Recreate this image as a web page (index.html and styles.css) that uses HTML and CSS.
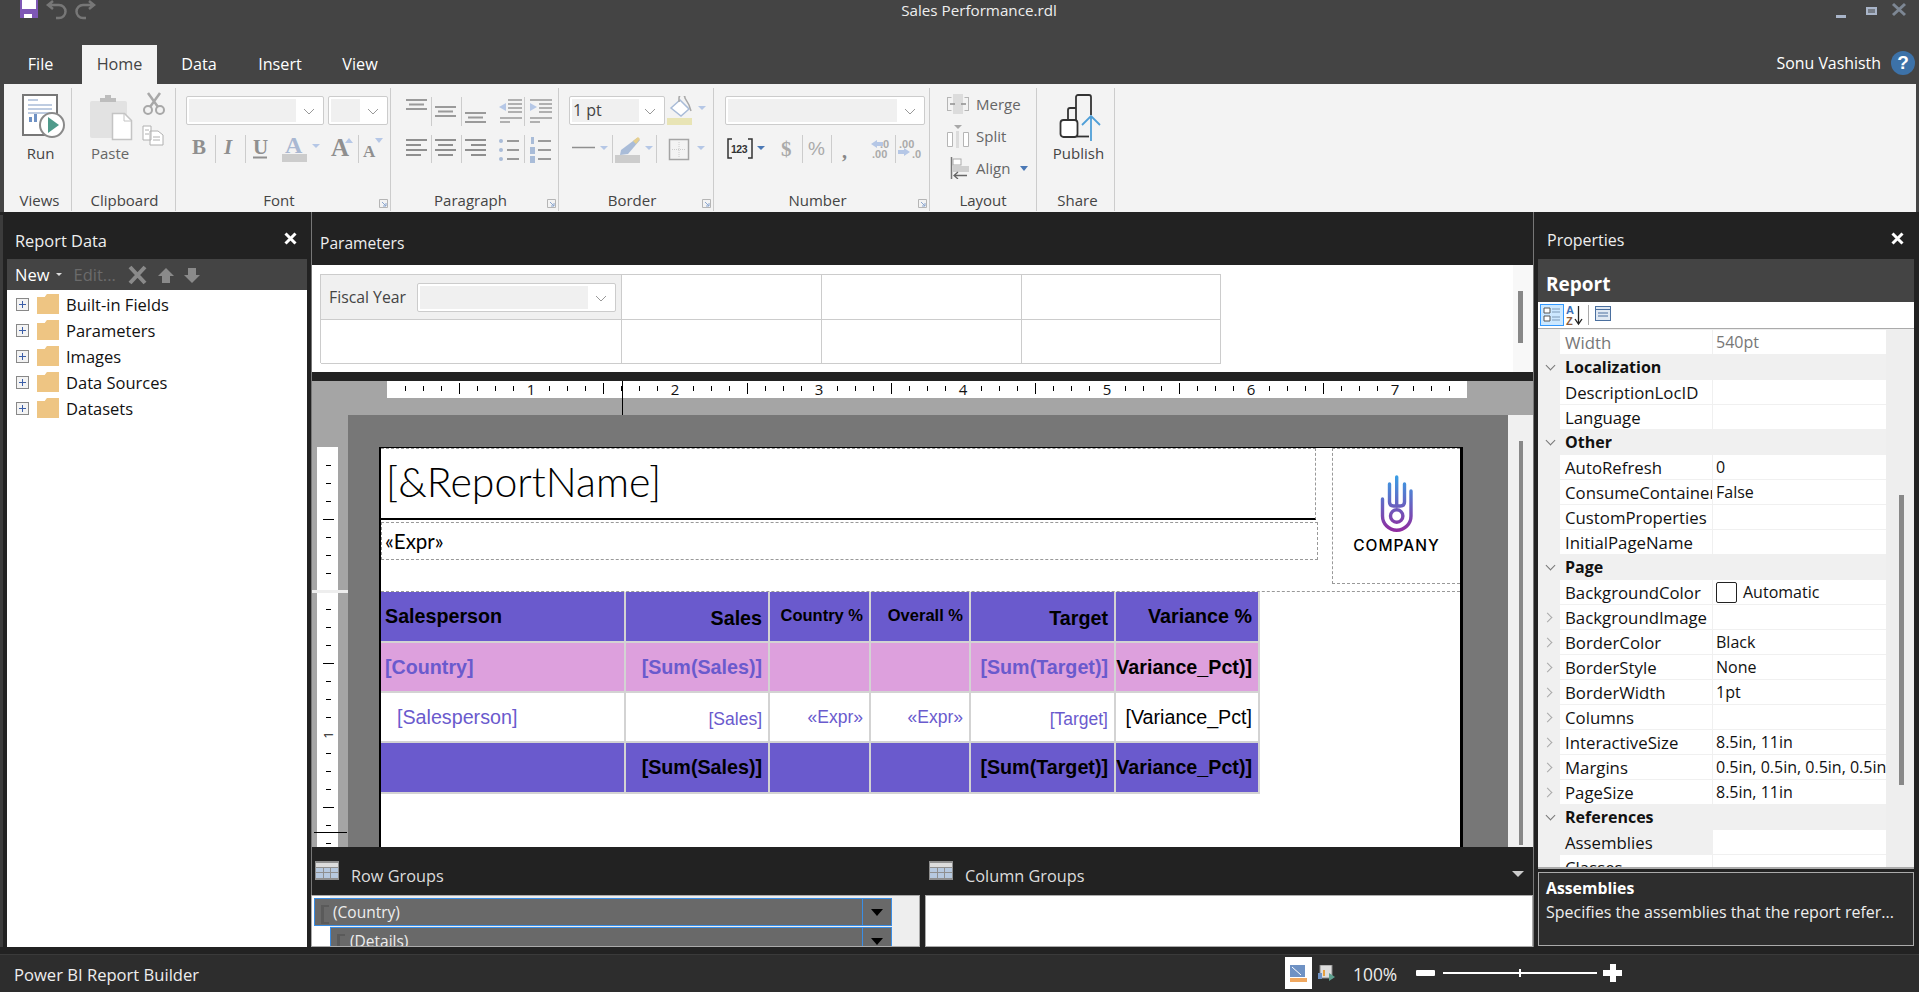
FILE: index.html
```html
<!DOCTYPE html>
<html lang="en">
<head>
    <meta charset="utf-8">
    <title>Sales Performance.rdl - Power BI Report Builder</title>
    <link rel="stylesheet" href="styles.css">
</head>
<body>
    <header class="titlebar">
        <svg class="qat" viewBox="18 0 80 22" width="80" height="22">
            <rect x="20" y="0" width="18" height="18" fill="#7e57b5"/>
            <rect x="22" y="0" width="14" height="9" fill="#fff"/>
            <rect x="24" y="14" width="8" height="4" fill="#fff"/>
            <path d="M50 5h9a6 6 0 0 1 0 13h-3M53 1l-5 4 5 4" fill="none" stroke="#777" stroke-width="2.5"/>
            <path d="M92 5h-9a6 6 0 0 0 0 13h3M89 1l5 4-5 4" fill="none" stroke="#777" stroke-width="2.5"/>
        </svg>
        <div class="doc-title">Sales Performance.rdl</div>
        <svg class="winctl" viewBox="1830 0 84 20" width="84" height="20">
            <rect x="1836" y="15" width="10" height="3" fill="#a9b5c9"/>
            <rect x="1866" y="7" width="11" height="8" fill="#a9b5c9"/>
            <path d="M1868 10h7M1868 12h7" stroke="#444" stroke-width="1"/>
            <path d="M1893 4l12 11M1905 4l-12 11" stroke="#7d8794" stroke-width="3"/>
        </svg>
    </header>

    <nav class="tabs">
        <a class="tab t-file">File</a>
        <a class="tab t-home active">Home</a>
        <a class="tab t-data">Data</a>
        <a class="tab t-insert">Insert</a>
        <a class="tab t-view">View</a>
        <span class="user">Sonu Vashisth</span>
        <span class="help">?</span>
    </nav>

    <section class="ribbon">
        <div class="group g-views">
            <div class="g-body">
                <div class="big">
                    <svg class="run-ic" viewBox="23 94 44 44" width="44" height="44">
                        <rect x="24" y="95" width="34" height="40" fill="#fff" stroke="#777" stroke-width="2"/>
                        <path d="M29 100h10M29 105h24M29 109h24M29 113h24" stroke="#a9bcd8" stroke-width="1.5"/>
                        <path d="M30 122h3v-5h-3zM35 122h3v-8h-3z" fill="#6f92c4"/>
                        <circle cx="53" cy="125" r="12" fill="#fff" stroke="#8a8a8a" stroke-width="2"/>
                        <path d="M49 117l11 8-11 8z" fill="#4f9a8b"/>
                    </svg>
                    <span class="big-label">Run</span>
                </div>
            </div>
            <div class="g-label">Views</div>
        </div>

        <div class="group g-clipboard">
            <div class="g-body">
                <svg viewBox="73 88 102 80" width="102" height="80">
                    <rect x="91" y="101" width="37" height="37" rx="2" fill="#e2e2e2"/>
                    <path d="M101 102v-4h5v-3h6v3h5v4z" fill="#bdbdbd"/>
                    <path d="M113.5 113.5h12l7 7v19h-19z" fill="#fff" stroke="#c4c4c4" stroke-width="1.5"/>
                    <path d="M125 113v8h7" fill="none" stroke="#c4c4c4"/>
                    <path d="M149 93l10 14M161 93l-10 14" stroke="#a8a8a8" stroke-width="2.5"/>
                    <circle cx="149" cy="110" r="4" fill="none" stroke="#a8a8a8" stroke-width="2"/>
                    <circle cx="161" cy="110" r="4" fill="none" stroke="#a8a8a8" stroke-width="2"/>
                    <path d="M144 126h8v14h-8zM151 131h8l5 4v10h-13z" fill="#fff" stroke="#b0b0b0"/>
                    <path d="M146 130h4M146 134h4M154 137h7M154 140h7" stroke="#b0b0b0"/>
                </svg>
                <span class="paste-label">Paste</span>
            </div>
            <div class="g-label">Clipboard</div>
        </div>

        <div class="group g-font">
            <div class="g-body">
                <div class="combos">
                    <div class="combo w-font"><span class="combo-in w-font-in"></span><svg class="chev" viewBox="0 0 12 7" width="12" height="7"><path d="M1 1l5 5 5-5" fill="none" stroke="#999"/></svg></div>
                    <div class="combo w-size"><span class="combo-in w-size-in"></span><svg class="chev" viewBox="0 0 12 7" width="12" height="7"><path d="M1 1l5 5 5-5" fill="none" stroke="#999"/></svg></div>
                </div>
                <svg class="tool-row" viewBox="176 133 215 32" width="215" height="32">
                    <text x="192" y="154" class="st st-b">B</text>
                    <path d="M215.5 135v28M245.5 135v28M358.5 135v28" stroke="#ccc"/>
                    <text x="224" y="154" class="st st-i">I</text>
                    <text x="253" y="154" class="st st-b">U</text>
                    <path d="M253 157.5h14" stroke="#8f8f8f" stroke-width="2"/>
                    <text x="285" y="153" class="st st-a">A</text>
                    <rect x="282" y="154" width="25" height="8" fill="#ccc"/>
                    <path d="M312 144h8l-4 4z" fill="#b5c7e6"/>
                    <text x="331" y="156" class="st st-g">A</text>
                    <path d="M345 143l4-5 4 5z" fill="#b5c7e6"/>
                    <text x="363" y="157" class="st st-s">A</text>
                    <path d="M375 138h8l-4 5z" fill="#b5c7e6"/>
                </svg>
            </div>
            <div class="g-label">Font</div>
            <svg class="launcher" viewBox="0 0 9 9" width="9" height="9"><path d="M.5.5h8v8h-8z" fill="none" stroke="#b5b5b5"/><path d="M3 3l4 4M7 4v3H4" fill="none" stroke="#8ba6cf"/></svg>
        </div>

        <div class="group g-para">
            <div class="g-body">
                <svg viewBox="392 88 167 80" width="167" height="80">
                    <path d="M432.5 97v29M462.5 97v29M525.5 97v29M432.5 135v28M462.5 135v28M525.5 135v28" stroke="#ccc"/>
                    <path d="M407 100h21M410 104.5h15M407 109h21" stroke="#9a9a9a" stroke-width="2"/>
                    <path d="M436 107h21M439 111.5h15M436 116h21" stroke="#9a9a9a" stroke-width="2"/>
                    <path d="M466 113h21M469 117.5h15M466 122h21" stroke="#9a9a9a" stroke-width="2"/>
                    <path d="M509 100h14M509 104h14M509 108h14M509 112h14M501 118h22M501 122h10" stroke="#9a9a9a" stroke-width="1.5"/>
                    <path d="M507 103l-7 4 7 4z" fill="#b5c7e6"/>
                    <path d="M531 100h22M540 104h13M540 108h13M540 112h13M531 118h22M531 122h10" stroke="#9a9a9a" stroke-width="1.5"/>
                    <path d="M531 103l7 4-7 4z" fill="#b5c7e6"/>
                    <path d="M407 140h21M407 145h15M407 150h21M407 155h15" stroke="#8f8f8f" stroke-width="2"/>
                    <path d="M436 140h21M439 145h15M436 150h21M439 155h15" stroke="#8f8f8f" stroke-width="2"/>
                    <path d="M466 140h21M472 145h15M466 150h21M472 155h15" stroke="#8f8f8f" stroke-width="2"/>
                    <path d="M508 141h12M508 150h12M508 159h12" stroke="#9a9a9a" stroke-width="2"/>
                    <circle cx="502" cy="141" r="2" fill="#a9bcd8"/><circle cx="502" cy="150" r="2" fill="#a9bcd8"/><circle cx="502" cy="159" r="2" fill="#a9bcd8"/>
                    <path d="M539 141h13M539 150h13M539 159h13" stroke="#9a9a9a" stroke-width="2"/>
                    <path d="M532 137h3v7h-3zM531 147h5v7h-5zM531 156h5v7h-5z" fill="#a9bcd8"/>
                </svg>
            </div>
            <div class="g-label">Paragraph</div>
            <svg class="launcher" viewBox="0 0 9 9" width="9" height="9"><path d="M.5.5h8v8h-8z" fill="none" stroke="#b5b5b5"/><path d="M3 3l4 4M7 4v3H4" fill="none" stroke="#8ba6cf"/></svg>
        </div>

        <div class="group g-border">
            <div class="g-body">
                <div class="combos">
                    <div class="combo w-line"><span class="combo-in w-line-in">1 pt</span><svg class="chev" viewBox="0 0 12 7" width="12" height="7"><path d="M1 1l5 5 5-5" fill="none" stroke="#999"/></svg></div>
                    <svg viewBox="668 96 42 30" width="42" height="30">
                        <path d="M672 108l9-8 9 9-8 7z" fill="#fff" stroke="#a9bcd8" stroke-width="1.5"/>
                        <path d="M680 102v-4a3 3 0 0 1 6 0l4 7 2 6" fill="none" stroke="#a8a8a8" stroke-width="1.5"/>
                        <rect x="668" y="118" width="25" height="7" fill="#e8e4b5"/>
                        <path d="M699 106h8l-4 4z" fill="#b5c7e6"/>
                    </svg>
                </div>
                <svg class="tool-row" viewBox="560 133 154 32" width="154" height="32">
                    <path d="M573 147.5h23" stroke="#8f8f8f" stroke-width="1.5"/>
                    <path d="M601 146h8l-4 4z" fill="#b5c7e6"/>
                    <path d="M613.5 135v28M657.5 135v28" stroke="#ccc"/>
                    <path d="M622 150l16-12 3 2-12 14-8 1z" fill="#a9bcd8"/>
                    <path d="M634 141l5-4 2 2-4 5z" fill="#e6cf8f"/>
                    <rect x="616" y="155" width="25" height="8" fill="#ccc"/>
                    <path d="M646 146h8l-4 4z" fill="#b5c7e6"/>
                    <rect x="670.5" y="139.5" width="19" height="20" fill="none" stroke="#a5a5a5" stroke-width="1.5"/>
                    <path d="M680 142v15M673 149.5h14" stroke="#ccc" stroke-dasharray="1 1"/>
                    <path d="M698 146h8l-4 4z" fill="#b5c7e6"/>
                </svg>
            </div>
            <div class="g-label">Border</div>
            <svg class="launcher" viewBox="0 0 9 9" width="9" height="9"><path d="M.5.5h8v8h-8z" fill="none" stroke="#b5b5b5"/><path d="M3 3l4 4M7 4v3H4" fill="none" stroke="#8ba6cf"/></svg>
        </div>

        <div class="group g-number">
            <div class="g-body">
                <div class="combos">
                    <div class="combo w-num"><span class="combo-in w-num-in"></span><svg class="chev" viewBox="0 0 12 7" width="12" height="7"><path d="M1 1l5 5 5-5" fill="none" stroke="#999"/></svg></div>
                </div>
                <svg class="tool-row" viewBox="714 133 216 32" width="216" height="32">
                    <path d="M732 139h-4v19h4M748 139h4v19h-4" fill="none" stroke="#333" stroke-width="1.5"/>
                    <text x="731" y="153" class="st st-123">123</text>
                    <path d="M757 146h8l-4 4z" fill="#4a78b5"/>
                    <text x="781" y="156" class="st st-cur">$</text>
                    <path d="M802.5 135v28M831.5 135v28M895.5 135v28" stroke="#ccc"/>
                    <text x="808" y="155" class="st st-pct">%</text>
                    <text x="842" y="158" class="st st-comma">,</text>
                    <path d="M871 144l6-4v2h6v4h-6v2z" fill="#b5c7e6"/>
                    <text x="880" y="148" class="st st-dec">.0</text>
                    <text x="872" y="158" class="st st-dec">.00</text>
                    <text x="899" y="148" class="st st-dec">.00</text>
                    <text x="912" y="158" class="st st-dec">.0</text>
                    <path d="M910 152l-6-4v2h-6v4h6v2z" fill="#b5c7e6"/>
                </svg>
            </div>
            <div class="g-label">Number</div>
            <svg class="launcher" viewBox="0 0 9 9" width="9" height="9"><path d="M.5.5h8v8h-8z" fill="none" stroke="#b5b5b5"/><path d="M3 3l4 4M7 4v3H4" fill="none" stroke="#8ba6cf"/></svg>
        </div>

        <div class="group g-layout">
            <div class="g-body">
                <div class="lay-row">
                    <svg viewBox="0 0 24 22" width="24" height="22">
                        <path d="M1.5 4.5h4M1.5 17.5h4M18.5 4.5h4M18.5 17.5h4M1.5 4v14M22.5 4v14" fill="none" stroke="#b5b5b5"/>
                        <rect x="7" y="1" width="10" height="20" fill="#dcdcdc"/>
                        <path d="M4 11h5M20 11h-5" stroke="#8f8f8f" stroke-width="1.5"/>
                    </svg>
                    <span>Merge</span>
                </div>
                <div class="lay-row">
                    <svg viewBox="0 0 24 24" width="24" height="24">
                        <path d="M1.5 8.5h5v14h-5zM17.5 8.5h5v14h-5z" fill="#fff" stroke="#b5b5b5"/>
                        <rect x="10" y="7" width="3" height="17" fill="#dcdcdc"/>
                        <path d="M8 1h8l-4 4z" fill="#a8a8a8"/>
                    </svg>
                    <span>Split</span>
                </div>
                <div class="lay-row">
                    <svg viewBox="0 0 24 22" width="24" height="22">
                        <path d="M5.5 0v22" stroke="#777" stroke-width="1.5"/>
                        <rect x="7" y="2" width="8" height="6" fill="#fff" stroke="#aaa"/>
                        <rect x="7" y="9" width="16" height="6" fill="#cfcfcf"/>
                        <path d="M21 18.5H8M12 15l-4 3.5 4 3.5" fill="none" stroke="#666" stroke-width="1.3"/>
                    </svg>
                    <span>Align</span>
                    <svg class="lay-caret" viewBox="0 0 8 5" width="8" height="5"><path d="M0 0h8L4 5z" fill="#4a78b5"/></svg>
                </div>
            </div>
            <div class="g-label">Layout</div>
        </div>

        <div class="group g-share">
            <div class="g-body">
                <div class="big">
                    <svg class="pub-ic" viewBox="0 0 44 48" width="44" height="48">
                        <path d="M17 14V3a2 2 0 0 1 2-2h11a2 2 0 0 1 2 2v18M17 14H11a2 2 0 0 0-2 2v10M17 14v12" fill="none" stroke="#333" stroke-width="1.8"/>
                        <rect x="1.5" y="26" width="17" height="17" rx="3" fill="#fff" stroke="#333" stroke-width="1.8"/>
                        <path d="M18 42.5h12" stroke="#333" stroke-width="1.8"/>
                        <path d="M32 47V22M23 31l9-9 9 9" fill="none" stroke="#4f9fd8" stroke-width="1.8"/>
                    </svg>
                    <span class="big-label publish">Publish</span>
                </div>
            </div>
            <div class="g-label">Share</div>
        </div>
    </section>

    <main class="workspace">
        <aside class="data-panel">
            <div class="panel-head">
                <span>Report Data</span>
                <svg class="close" viewBox="0 0 13 13" width="13" height="13"><path d="M1.5 1.5l10 10M11.5 1.5l-10 10" stroke="#fff" stroke-width="3"/></svg>
            </div>
            <div class="data-tools">
                <span class="new">New</span>
                <svg class="new-caret" viewBox="0 0 6 3" width="6" height="3"><path d="M0 0h6L3 3z" fill="#ddd"/></svg>
                <span class="edit">Edit...</span>
                <svg viewBox="0 0 74 20" width="74" height="20">
                    <path d="M2 2l15 16M17 2L2 18" stroke="#8a8a8a" stroke-width="4"/>
                    <path d="M38 3l8 8h-4v7h-8v-7h-4z" fill="#8a8a8a"/>
                    <path d="M64 18l8-8h-4V3h-8v7h-4z" fill="#8a8a8a"/>
                </svg>
            </div>
            <ul class="tree">
                <li><i class="plus"></i><i class="folder"></i>Built-in Fields</li>
                <li><i class="plus"></i><i class="folder"></i>Parameters</li>
                <li><i class="plus"></i><i class="folder"></i>Images</li>
                <li><i class="plus"></i><i class="folder"></i>Data Sources</li>
                <li><i class="plus"></i><i class="folder"></i>Datasets</li>
            </ul>
        </aside>

        <div class="center">
            <div class="params-head">Parameters</div>
            <div class="params-body">
                <div class="params-grid">
                    <div class="p-cell p-first">
                        <span>Fiscal Year</span>
                        <div class="combo w-fy"><span class="combo-in w-fy-in"></span><svg class="chev" viewBox="0 0 12 7" width="12" height="7"><path d="M1 1l5 5 5-5" fill="none" stroke="#999"/></svg></div>
                    </div>
                    <div class="p-cell"></div><div class="p-cell"></div><div class="p-cell"></div>
                    <div class="p-cell"></div><div class="p-cell"></div><div class="p-cell"></div><div class="p-cell"></div>
                </div>
                <div class="params-scroll"><i></i></div>
            </div>
            <div class="band"></div>

            <div class="design">
                <svg class="hruler" viewBox="312 381 1221 34" width="1221" height="34">
                    <defs>
                        <pattern id="hticks" x="387" y="381" width="144" height="17" patternUnits="userSpaceOnUse">
                            <path d="M18.5 5v5M36.5 5v5M54.5 5v5M90.5 5v5M108.5 5v5M126.5 5v5" stroke="#000"/>
                            <path d="M72.5 2v11" stroke="#000"/>
                        </pattern>
                    </defs>
                    <rect x="387" y="381" width="1080" height="17" fill="#fff"/>
                    <rect x="387" y="381" width="1080" height="17" fill="url(#hticks)"/>
                    <g class="rnum" text-anchor="middle">
                        <text x="531" y="395">1</text><text x="675" y="395">2</text><text x="819" y="395">3</text>
                        <text x="963" y="395">4</text><text x="1107" y="395">5</text><text x="1251" y="395">6</text><text x="1395" y="395">7</text>
                    </g>
                    <path d="M622.5 381v34" stroke="#000"/>
                </svg>
                <div class="design-row">
                    <svg class="vruler" viewBox="312 415 36 432" width="36" height="432">
                        <defs>
                            <pattern id="vticks" x="317" y="447" width="21" height="144" patternUnits="userSpaceOnUse">
                                <path d="M9 18.5h5M9 36.5h5M9 54.5h5M9 90.5h5M9 108.5h5M9 126.5h5" stroke="#000"/>
                                <path d="M6 72.5h11" stroke="#000"/>
                            </pattern>
                        </defs>
                        <rect x="317" y="447" width="21" height="400" fill="#fff"/>
                        <rect x="317" y="447" width="21" height="400" fill="url(#vticks)"/>
                        <rect x="312" y="590" width="36" height="3" fill="#eee"/>
                        <text class="rnum-v" transform="translate(333 735) rotate(-90)" text-anchor="middle">1</text>
                        <path d="M314 832.5h33" stroke="#000"/>
                    </svg>
                    <div class="canvas">
                        <div class="page">
                            <div class="rep-head">
                                <div class="rep-titles">
                                    <div class="rep-title">[&amp;ReportName]</div>
                                    <div class="rep-sub">«Expr»</div>
                                </div>
                                <div class="rep-logo">
                                    <svg viewBox="0 0 34 58" width="34" height="58">
                                        <defs>
                                            <linearGradient id="hand" gradientUnits="userSpaceOnUse" x1="0" y1="0" x2="0" y2="58">
                                                <stop offset="0" stop-color="#38a0e6"/>
                                                <stop offset="1" stop-color="#93289d"/>
                                            </linearGradient>
                                        </defs>
                                        <g fill="none" stroke="url(#hand)" stroke-width="3.4" stroke-linecap="round">
                                            <path d="M2.5 24V41a14.25 14.25 0 0 0 28.5 0V16"/>
                                            <path d="M9.5 9V27q0 4 4 4h7q4 0 4-4V9"/>
                                            <path d="M16.7 2V31"/>
                                            <circle cx="16.7" cy="41" r="6.2"/>
                                        </g>
                                    </svg>
                                    <span class="company">COMPANY</span>
                                </div>
                            </div>
                            <div class="rep-table">
                                <div class="c h l big-b">Salesperson</div>
                                <div class="c h r big-b low">Sales</div>
                                <div class="c h r small-b">Country %</div>
                                <div class="c h r small-b">Overall %</div>
                                <div class="c h r big-b low">Target</div>
                                <div class="c h r big-b">Variance %</div>

                                <div class="c pk l big-b">[Country]</div>
                                <div class="c pk r big-b">[Sum(Sales)]</div>
                                <div class="c pk"></div>
                                <div class="c pk"></div>
                                <div class="c pk r big-b">[Sum(Target)]</div>
                                <div class="c pk r big-b blk">Variance_Pct)]</div>

                                <div class="c wh l ind">[Salesperson]</div>
                                <div class="c wh r sm low">[Sales]</div>
                                <div class="c wh r sm">«Expr»</div>
                                <div class="c wh r sm">«Expr»</div>
                                <div class="c wh r sm low">[Target]</div>
                                <div class="c wh r blk">[Variance_Pct]</div>

                                <div class="c h"></div>
                                <div class="c h r big-b">[Sum(Sales)]</div>
                                <div class="c h"></div>
                                <div class="c h"></div>
                                <div class="c h r big-b">[Sum(Target)]</div>
                                <div class="c h r big-b">Variance_Pct)]</div>
                            </div>
                        </div>
                    </div>
                    <div class="design-scroll"><i></i></div>
                </div>
            </div>

            <div class="groups">
                <div class="groups-head">
                    <div class="gh gh-row">
                        <svg class="tbl-ic" viewBox="0 0 24 19" width="24" height="19"><rect width="24" height="19" fill="#8f8f8f"/><path d="M1 2h22v4H1z" fill="#ddd"/><path d="M1 7h7v4H1zM9 7h6v4H9zM16 7h7v4h-7zM1 12h7v5H1zM9 12h6v5H9zM16 12h7v5h-7z" fill="#b7c9df"/></svg>
                        <span>Row Groups</span>
                    </div>
                    <div class="gh gh-col">
                        <svg class="tbl-ic" viewBox="0 0 24 19" width="24" height="19"><rect width="24" height="19" fill="#8f8f8f"/><path d="M1 2h22v4H1z" fill="#ddd"/><path d="M1 7h7v4H1zM9 7h6v4H9zM16 7h7v4h-7zM1 12h7v5H1zM9 12h6v5H9zM16 12h7v5h-7z" fill="#b7c9df"/></svg>
                        <span>Column Groups</span>
                        <svg class="gh-tri" viewBox="0 0 12 6" width="12" height="6"><path d="M0 0h12L6 6z" fill="#ccc"/></svg>
                    </div>
                </div>
                <div class="groups-body">
                    <div class="row-groups">
                        <div class="grp-item"><span>(Country)</span><b class="grp-drop"><svg viewBox="0 0 12 7" width="12" height="7"><path d="M0 0h12L6 7z" fill="#000"/></svg></b></div>
                        <div class="grp-item grp-sub"><span>(Details)</span><b class="grp-drop"><svg viewBox="0 0 12 7" width="12" height="7"><path d="M0 0h12L6 7z" fill="#000"/></svg></b></div>
                    </div>
                    <div class="col-groups"></div>
                </div>
            </div>
        </div>

        <aside class="prop-panel">
            <div class="panel-head">
                <span>Properties</span>
                <svg class="close" viewBox="0 0 13 13" width="13" height="13"><path d="M1.5 1.5l10 10M11.5 1.5l-10 10" stroke="#fff" stroke-width="3"/></svg>
            </div>
            <div class="prop-obj">Report</div>
            <div class="prop-tools">
                <svg viewBox="1538 302 80 25" width="80" height="25">
                    <rect x="1540.5" y="304.5" width="23" height="21" fill="#cce8ff" stroke="#3399ff"/>
                    <path d="M1544 308h6v5h-6zM1544 316h6v5h-6z" fill="#fff" stroke="#555"/>
                    <path d="M1552 309h8M1552 312h8M1552 317h8M1552 320h8" stroke="#7d9ab8"/>
                    <text x="1566" y="314" class="az az-a">A</text>
                    <text x="1566" y="325" class="az az-z">Z</text>
                    <path d="M1578.5 306v17M1575 319l3.5 5 3.5-5" fill="none" stroke="#222" stroke-width="1.3"/>
                    <path d="M1588.5 305v20" stroke="#aaa"/>
                    <rect x="1595.5" y="306.5" width="15" height="14" fill="#dfe8f3" stroke="#4a6f9f"/>
                    <path d="M1595 309.5h16M1598 313h10M1598 316h10" stroke="#4a6f9f"/>
                </svg>
            </div>
            <div class="prop-grid">
                <div class="prop-rows">
                    <div class="pr dim"><em></em><span class="n">Width</span><span class="v">540pt</span></div>
                    <div class="pr cat"><em class="down"></em><span class="n">Localization</span></div>
                    <div class="pr"><em></em><span class="n">DescriptionLocID</span><span class="v"></span></div>
                    <div class="pr"><em></em><span class="n">Language</span><span class="v"></span></div>
                    <div class="pr cat"><em class="down"></em><span class="n">Other</span></div>
                    <div class="pr"><em></em><span class="n">AutoRefresh</span><span class="v">0</span></div>
                    <div class="pr"><em></em><span class="n">ConsumeContainer</span><span class="v">False</span></div>
                    <div class="pr"><em></em><span class="n">CustomProperties</span><span class="v"></span></div>
                    <div class="pr"><em></em><span class="n">InitialPageName</span><span class="v"></span></div>
                    <div class="pr cat"><em class="down"></em><span class="n">Page</span></div>
                    <div class="pr"><em></em><span class="n">BackgroundColor</span><span class="v swatch-v"><i class="swatch"></i>Automatic</span></div>
                    <div class="pr"><em class="right"></em><span class="n">BackgroundImage</span><span class="v"></span></div>
                    <div class="pr"><em class="right"></em><span class="n">BorderColor</span><span class="v">Black</span></div>
                    <div class="pr"><em class="right"></em><span class="n">BorderStyle</span><span class="v">None</span></div>
                    <div class="pr"><em class="right"></em><span class="n">BorderWidth</span><span class="v">1pt</span></div>
                    <div class="pr"><em class="right"></em><span class="n">Columns</span><span class="v"></span></div>
                    <div class="pr"><em class="right"></em><span class="n">InteractiveSize</span><span class="v">8.5in, 11in</span></div>
                    <div class="pr"><em class="right"></em><span class="n">Margins</span><span class="v">0.5in, 0.5in, 0.5in, 0.5in</span></div>
                    <div class="pr"><em class="right"></em><span class="n">PageSize</span><span class="v">8.5in, 11in</span></div>
                    <div class="pr cat"><em class="down"></em><span class="n">References</span></div>
                    <div class="pr sel"><em></em><span class="n">Assemblies</span><span class="v"></span></div>
                    <div class="pr"><em></em><span class="n">Classes</span><span class="v"></span></div>
                </div>
                <div class="prop-scroll"><i></i></div>
            </div>
            <div class="prop-desc">
                <strong>Assemblies</strong>
                <p>Specifies the assemblies that the report refer...</p>
            </div>
        </aside>
    </main>

    <footer class="status">
        <span class="app-name">Power BI Report Builder</span>
        <div class="view-btn">
            <svg viewBox="0 0 17 17" width="17" height="17"><rect y="0" width="15" height="12" fill="#6f92c4"/><path d="M2 2l9 8" stroke="#fff"/><rect y="13" width="17" height="4" fill="#f0a860"/></svg>
        </div>
        <svg class="view-ic" viewBox="0 0 17 17" width="17" height="17"><rect x="2" width="12" height="13" fill="#ddd" stroke="#888"/><path d="M0 8h4v6H0z" fill="#6f92c4"/><path d="M6 5v6" stroke="#e6a040" stroke-width="2"/><path d="M11 8l6 4-6 4z" fill="#5ea08f"/></svg>
        <span class="zoom-val">100%</span>
        <svg class="zoom" viewBox="1415 0 206 20" width="206" height="20">
            <rect x="1415" y="7" width="19" height="6" rx="1" fill="#fff"/>
            <rect x="1442" y="9" width="154" height="2" fill="#fff"/>
            <rect x="1518" y="6" width="2" height="8" fill="#fff"/>
            <path d="M1609 1h6v6h6v6h-6v6h-6v-6h-7V7h7z" fill="#fff"/>
        </svg>
    </footer>
</body>
</html>
```

FILE: styles.css
```css
* {
    box-sizing: border-box;
}

body {
    margin: 0;
    width: 1919px;
    height: 992px;
    overflow: hidden;
    background: #444;
    color: #fff;
    font-family: "Open Sans", "Noto Sans", sans-serif;
    font-size: 16px;
    display: flex;
    flex-direction: column;
}

svg {
    display: block;
    flex: none;
}

/* title bar */
.titlebar {
    height: 45px;
    flex: none;
    display: grid;
    grid-template-columns: 900px 158px 1fr;
    align-items: start;
}

.qat {
    margin-left: 18px;
}

.doc-title {
    line-height: 21px;
    font-size: 15.2px;
    color: #eee;
    text-align: center;
    white-space: nowrap;
}

.winctl {
    justify-self: end;
    margin-right: 5px;
}

/* tabs */
.tabs {
    height: 39px;
    flex: none;
    display: flex;
    align-items: stretch;
    padding-left: 8px;
}

.tab {
    padding-top: 9px;
    line-height: 20px;
    font-size: 16.2px;
    color: #fff;
    text-align: center;
}

.t-file { width: 65px; margin-right: 9px; }
.t-home { width: 75px; }
.t-data { width: 84px; }
.t-insert { width: 78px; }
.t-view { width: 82px; }

.tab.active {
    background: #f3f3f3;
    color: #444;
}

.user {
    margin-left: auto;
    line-height: 20px;
    padding-top: 8px;
    font-size: 15.9px;
}

.help {
    width: 24px;
    height: 24px;
    margin: 6px 4px 0 10px;
    border-radius: 50%;
    background: #3d72a8;
    font: bold 19px/24px "Liberation Sans", sans-serif;
    text-align: center;
}

/* ribbon */
.ribbon {
    height: 128px;
    flex: none;
    margin: 0 3px 0 4px;
    background: #f3f3f3;
    color: #444;
    display: flex;
    padding-top: 4px;
}

.group {
    position: relative;
    flex: none;
    height: 123px;
    border-right: 1px solid #ccc;
    display: flex;
    flex-direction: column;
}

.g-body {
    height: 100px;
    position: relative;
}

.g-label {
    height: 23px;
    line-height: 25px;
    text-align: center;
    font-size: 15px;
}

.launcher {
    position: absolute;
    right: 2px;
    bottom: 3px;
}

.g-views { width: 68px; }
.g-clipboard { width: 104px; }
.g-font { width: 215px; }
.g-para { width: 168px; }
.g-border { width: 155px; }
.g-number { width: 216px; }
.g-layout { width: 107px; }
.g-share { width: 78px; }

.g-views .g-label { padding-left: 4px; }
.g-clipboard .g-label { padding-left: 2px; }
.g-font .g-label,
.g-border .g-label,
.g-para .g-label,
.g-number .g-label { padding-right: 8px; }
.g-share .g-label { padding-left: 4px; }

.big {
    display: flex;
    flex-direction: column;
    align-items: center;
    padding-top: 6px;
}

.g-views .big { padding-left: 6px; }
.g-share .big { padding-left: 6px; }

.run-ic { margin-left: 6px; }
.pub-ic { margin-left: 5px; }

.big-label {
    line-height: 20px;
    margin-top: 5px;
    font-size: 15px;
}

.publish {
    margin-top: 1px;
}

.paste-label {
    position: absolute;
    left: 19px;
    top: 55px;
    line-height: 20px;
    font-size: 15px;
    color: #666;
}

.combos {
    display: flex;
    gap: 4px;
    padding-top: 8px;
    height: 37px;
}

.g-font .combos { padding-left: 10px; }
.g-border .combos { padding-left: 10px; gap: 2px; }
.g-number .combos { padding-left: 11px; }

.combo {
    height: 29px;
    border: 1px solid #ccc;
    border-radius: 2px;
    background: #fff;
    display: flex;
    align-items: center;
    padding: 2px;
    position: relative;
    color: #444;
}

.combo-in {
    height: 100%;
    background: #f0f0f0;
    display: block;
    line-height: 22px;
    padding-left: 1px;
}

.chev {
    position: absolute;
    right: 8px;
    top: 11px;
}

.w-font { width: 138px; }
.w-font-in { width: 107px; }
.w-size { width: 60px; }
.w-size-in { width: 29px; }
.w-line { width: 96px; }
.w-line-in { width: 67px; }
.w-num { width: 200px; }
.w-num-in { width: 169px; }
.w-fy { width: 199px; }
.w-fy-in { width: 168px; }

.tool-row {
    margin-top: 8px;
}

.st {
    font-family: "Liberation Serif", serif;
    fill: #8f8f8f;
}

.st-b { font-size: 21px; font-weight: bold; }
.st-i { font-size: 21px; font-weight: bold; font-style: italic; }
.st-a { font-size: 24px; font-weight: bold; fill: #a9b8d2; }
.st-g { font-size: 25px; font-weight: bold; }
.st-s { font-size: 17px; font-weight: bold; }
.st-123 { font-size: 10.5px; font-weight: bold; fill: #333; font-family: "Liberation Sans", sans-serif; letter-spacing: -.5px; }
.st-cur { font-size: 21px; font-weight: bold; fill: #aaa; }
.st-pct { font-size: 19px; fill: #aaa; font-family: "Liberation Sans", sans-serif; }
.st-comma { font-size: 20px; font-weight: bold; fill: #888; }
.st-dec { font-size: 11px; fill: #aaa; font-weight: bold; font-family: "Liberation Sans", sans-serif; }

.lay-row {
    display: flex;
    align-items: center;
    height: 32px;
    padding-left: 16px;
    gap: 6px;
    color: #666;
    font-size: 15px;
}

.lay-caret {
    margin-left: 4px;
}

/* workspace */
.workspace {
    height: 735px;
    flex: none;
    display: flex;
    background: #222;
    padding-left: 3px;
    position: relative;
}

.workspace::before {
    content: "";
    position: absolute;
    left: 0;
    top: 3px;
    bottom: 0;
    width: 3px;
    background: #3c3c3c;
}

.panel-head {
    height: 47px;
    display: flex;
    align-items: center;
    justify-content: space-between;
    padding: 9px 10px 0 12px;
    color: #eee;
}

.close {
    margin-top: -3px;
}

.data-panel {
    width: 309px;
    flex: none;
    display: flex;
    flex-direction: column;
    border-right: 1px solid #777;
}

.data-panel .panel-head {
    padding-right: 14px;
    font-size: 16.4px;
}

.data-tools {
    height: 31px;
    margin: 0 4px;
    background: #444;
    display: flex;
    align-items: center;
    padding-left: 8px;
    font-size: 16.5px;
}

.new {
    color: #fff;
}

.new-caret {
    margin: 0 0 0 7px;
}

.edit {
    color: #6b6b6b;
    margin: 0 12px 0 11px;
}

.tree {
    flex: 1;
    margin: 0 4px;
    padding: 1px 0 0;
    list-style: none;
    background: #fff;
    color: #111;
    font-size: 16.5px;
}

.tree li {
    height: 26px;
    display: flex;
    align-items: center;
}

.plus {
    width: 13px;
    height: 13px;
    margin-left: 9px;
    border: 1px solid #888;
    background:
        linear-gradient(#3b5ea8, #3b5ea8) center / 7px 1px no-repeat,
        linear-gradient(#3b5ea8, #3b5ea8) center / 1px 7px no-repeat,
        #f3f3f3;
}

.folder {
    width: 22px;
    height: 20px;
    margin: 0 7px 0 8px;
    background: #eec583;
    clip-path: polygon(0 3px, 35% 3px, 45% 0, 100% 0, 100% 100%, 0 100%);
}

.center {
    width: 1221px;
    flex: none;
    display: flex;
    flex-direction: column;
}

.params-head {
    height: 53px;
    padding: 20px 0 0 8px;
    line-height: 22px;
    font-size: 15.6px;
    color: #eee;
}

.params-body {
    height: 107px;
    background: #fff;
    display: flex;
    justify-content: space-between;
    padding: 9px 0 9px 8px;
    color: #444;
    font-size: 15.8px;
}

.params-grid {
    width: 901px;
    display: grid;
    grid-template-columns: 301px 200px 200px 199px;
    grid-template-rows: 45px 44px;
    border-top: 1px solid #ccc;
    border-left: 1px solid #ccc;
}

.p-cell {
    border-right: 1px solid #ccc;
    border-bottom: 1px solid #ccc;
}

.p-first {
    background: #f0f0f0;
    display: flex;
    align-items: center;
    justify-content: space-between;
    padding: 0 5px 0 8px;
}

.params-scroll {
    width: 20px;
    margin: -9px 0;
    padding: 26px 0 0 5px;
    background: #f8f8f8;
}

.params-scroll i {
    display: block;
    width: 5px;
    height: 52px;
    background: #888;
}

.band {
    height: 9px;
}

.design {
    height: 466px;
    background: #a5a5a5;
    display: flex;
    flex-direction: column;
}

.hruler {
    flex: none;
    overflow: visible;
}

.rnum text {
    font: 15px "Open Sans", sans-serif;
    fill: #111;
}

.rnum-v {
    font: 13px "Open Sans", sans-serif;
    fill: #111;
}

.design-row {
    flex: 1;
    display: flex;
    min-height: 0;
}

.canvas {
    flex: 1;
    background: #777;
    padding: 32px 45px 0 31px;
    overflow: hidden;
}

.design-scroll {
    width: 25px;
    flex: none;
    background: #f0f0f0;
    padding: 26px 0 0 11px;
}

.design-scroll i {
    display: block;
    width: 4px;
    height: 404px;
    background: #888;
}

.page {
    height: 400px;
    background: #fff;
    border: solid #000;
    border-width: 1px 3px 0 2px;
    color: #000;
}

.rep-head {
    height: 144px;
    display: flex;
    border-bottom: 1px dashed #999;
}

.rep-titles {
    width: 938px;
}

.rep-title {
    height: 72px;
    width: 935px;
    border: dashed #999;
    border-width: 1px 1px 0 0;
    border-bottom: 2px solid #000;
    font: 300 41px/66px Lato, sans-serif;
    padding-left: 5px;
    color: #000;
}

.rep-sub {
    height: 38px;
    width: 937px;
    margin-top: 2px;
    border: 1px dashed #999;
    font: 20.5px/37px Lato, sans-serif;
    padding-left: 3px;
}

.rep-logo {
    width: 128px;
    margin-left: 13px;
    height: 136px;
    border: dashed #999;
    border-width: 1px 0 1px 1px;
    display: flex;
    flex-direction: column;
    align-items: center;
    padding-top: 26px;
}

.company {
    font: 500 15.5px/18px Inter, sans-serif;
    letter-spacing: 1px;
    margin-top: 4px;
}

.rep-table {
    width: 879px;
    display: grid;
    grid-template-columns: 243px 142px 99px 98px 143px 142px;
    grid-template-rows: 49px 48px 48px 49px;
    gap: 2px;
    padding: 0 2px 2px 0;
    background: #d3d3d3;
    font-family: "Liberation Sans", sans-serif;
    font-size: 19.7px;
}

.c {
    display: flex;
    align-items: center;
    white-space: nowrap;
    overflow: hidden;
    padding: 0 6px 0 4px;
}

.c.h { background: #6a5acd; color: #000; }
.c.pk { background: #dda0dd; color: #6a5acd; }
.c.wh { background: #fff; color: #6a5acd; }
.c.l { justify-content: flex-start; }
.c.r { justify-content: flex-end; }
.big-b { font-weight: bold; }
.small-b { font-weight: bold; font-size: 16.5px; padding-bottom: 2px; }
.low { padding-top: 4px; }
.ind { padding-left: 16px; }
.sm { font-size: 17.5px; }
.c.blk { color: #000; }

/* groups */
.groups {
    height: 100px;
    padding-top: 1px;
}

.groups-head {
    height: 47px;
    display: flex;
    color: #ddd;
    font-size: 16.3px;
}

.gh {
    display: flex;
    align-items: center;
    position: relative;
    padding-top: 8px;
}

.gh-row {
    width: 617px;
    padding-left: 3px;
}

.gh-col {
    flex: 1;
}

.tbl-ic {
    margin: -10px 12px 0 0;
}

.gh-tri {
    position: absolute;
    right: 9px;
    top: 23px;
}

.groups-body {
    height: 52px;
    display: flex;
    gap: 5px;
}

.row-groups {
    width: 609px;
    margin-left: -1px;
    background: linear-gradient(#fff, #fff) 0 0 / 18px 100% no-repeat, #eee;
    border: 1px solid #aaa;
    padding: 2px 27px 0 2px;
    overflow: hidden;
    font-size: 15.5px;
}

.grp-item {
    height: 28px;
    background: #696969;
    border: 1px solid #3a8ee6;
    color: #eee;
    display: flex;
    align-items: center;
    justify-content: space-between;
    padding-left: 18px;
    margin-bottom: 1px;
    position: relative;
}

.grp-item::before {
    content: "";
    position: absolute;
    left: 6px;
    top: 6px;
    width: 5px;
    height: 15px;
    border: solid #5a5a5a;
    border-width: 2px 0 2px 3px;
}

.grp-sub {
    margin-left: 16px;
    padding-left: 19px;
}

.grp-drop {
    width: 29px;
    height: 100%;
    border-left: 1px solid #3a8ee6;
    display: flex;
    align-items: center;
    justify-content: center;
}

.col-groups {
    flex: 1;
    background: #fff;
    border: 1px solid #aaa;
}

/* properties */
.prop-panel {
    flex: none;
    width: 386px;
    border-left: 1px solid #777;
    padding: 0 5px 0 4px;
    display: flex;
    flex-direction: column;
}

.prop-panel .panel-head {
    padding: 9px 10px 0 9px;
}

.prop-obj {
    height: 43px;
    background: #444;
    font-weight: bold;
    font-size: 19px;
    line-height: 24px;
    padding: 13px 0 0 8px;
}

.prop-tools {
    height: 26px;
    background: #fff;
}

.az {
    font: bold 11px "Liberation Sans", sans-serif;
}

.az-a { fill: #3a6fb5; }
.az-z { fill: #8a5a3a; }

.prop-grid {
    height: 541px;
    display: flex;
    border: 1px solid #aaa;
    border-width: 1px 0 2px;
    background: #eee;
    overflow: hidden;
    color: #111;
    font-size: 16px;
}

.prop-rows {
    width: 348px;
    flex: none;
    padding-top: 1px;
}

.pr {
    height: 25px;
    display: flex;
    align-items: center;
    background: #fff;
    border-bottom: 1px solid #f0f0f0;
}

.pr em {
    width: 22px;
    height: 100%;
    flex: none;
    background: #f0f0f0;
    position: relative;
}

.pr em.down::after,
.pr em.right::after {
    content: "";
    position: absolute;
    left: 9px;
    top: 7px;
    width: 6px;
    height: 6px;
    border: solid #777;
    border-width: 0 1px 1px 0;
    transform: rotate(45deg);
}

.pr em.right::after {
    left: 6px;
    top: 9px;
    transform: rotate(-45deg);
    border-color: #aaa;
}

.n {
    width: 153px;
    flex: none;
    padding-left: 5px;
    height: 100%;
    line-height: 25px;
    font-size: 16.8px;
    border-right: 1px solid #f0f0f0;
    white-space: nowrap;
    overflow: hidden;
}

.v {
    padding-left: 3px;
    height: 100%;
    white-space: nowrap;
    overflow: hidden;
    line-height: 25px;
    flex: 1;
}

.swatch-v {
    display: flex;
    align-items: center;
    gap: 6px;
}

.swatch {
    width: 21px;
    height: 21px;
    background: #fff;
    border: 1px solid #222;
    border-radius: 2px;
}

.pr.dim { color: #777; }

.pr.cat {
    background: #f0f0f0;
}

.pr.cat .n {
    font-weight: bold;
    font-size: 16px;
    width: auto;
    border: 0;
}

.pr.sel .n {
    background: #f0f0f0;
}

.prop-scroll {
    flex: 1;
    padding: 166px 0 0 13px;
}

.prop-scroll i {
    display: block;
    width: 5px;
    height: 290px;
    background: #888;
}

.prop-desc {
    height: 74px;
    margin-top: 3px;
    background: #2d2d2d;
    border: 1px solid #aaa;
    padding: 5px 7px;
    color: #eee;
    overflow: hidden;
}

.prop-desc strong {
    display: block;
    line-height: 20px;
    font-size: 15.8px;
    color: #fff;
}

.prop-desc p {
    margin: 4px 0 0;
    line-height: 20px;
    font-size: 16px;
    white-space: nowrap;
}

/* status bar */
.status {
    height: 45px;
    flex: none;
    background: #2d2d2d;
    box-shadow: inset 0 7px #222, inset 0 8px #3a3a3a;
    display: flex;
    align-items: center;
    padding: 10px 0 3px 14px;
    color: #eee;
}

.app-name {
    width: 1271px;
    font-size: 16.6px;
    padding-top: 3px;
}

.view-btn {
    width: 27px;
    height: 32px;
    background: #fff;
    display: flex;
    align-items: center;
    justify-content: center;
}

.view-ic {
    margin-left: 6px;
}

.zoom-val {
    width: 63px;
    margin-left: 18px;
    font-size: 17.4px;
    padding-top: 2px;
}
```
